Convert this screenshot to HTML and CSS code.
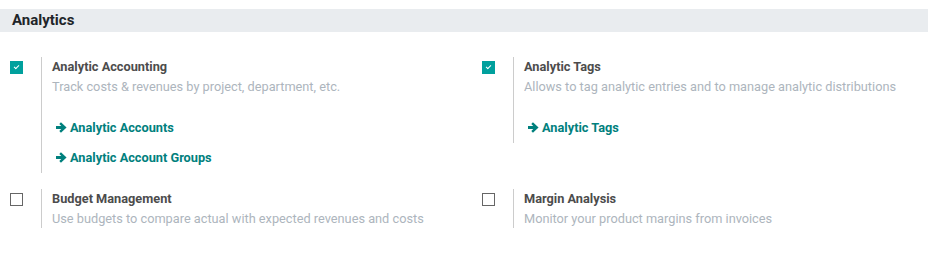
FILE: index.html
```html
<!DOCTYPE html>
<html lang="en">

<head>
    <meta charset="UTF-8">
    <meta name="viewport" content="width=device-width, initial-scale=1.0">
    <title>Analytics</title>
    <link rel="stylesheet" href="styles.css">
</head>

<body>
    <h2 class="section-title">Analytics</h2>
    <div class="settings">
        <div class="setting-box">
            <div class="left-pane">
                <span class="check checked"></span>
            </div>
            <div class="right-pane">
                <div class="label">Analytic Accounting</div>
                <div class="muted">Track costs &amp; revenues by project, department, etc.</div>
                <div class="links">
                    <a class="link" href="#"><svg class="arrow" viewBox="0 0 10 10"><path d="M0 3.6h4.8L3 1.8 4.5 0.3 9.6 5 4.5 9.7 3 8.2 4.8 6.4H0z"/></svg>Analytic Accounts</a>
                    <a class="link" href="#"><svg class="arrow" viewBox="0 0 10 10"><path d="M0 3.6h4.8L3 1.8 4.5 0.3 9.6 5 4.5 9.7 3 8.2 4.8 6.4H0z"/></svg>Analytic Account Groups</a>
                </div>
            </div>
        </div>
        <div class="setting-box">
            <div class="left-pane">
                <span class="check checked"></span>
            </div>
            <div class="right-pane">
                <div class="label">Analytic Tags</div>
                <div class="muted">Allows to tag analytic entries and to manage analytic distributions</div>
                <div class="links">
                    <a class="link" href="#"><svg class="arrow" viewBox="0 0 10 10"><path d="M0 3.6h4.8L3 1.8 4.5 0.3 9.6 5 4.5 9.7 3 8.2 4.8 6.4H0z"/></svg>Analytic Tags</a>
                </div>
            </div>
        </div>
        <div class="setting-box">
            <div class="left-pane">
                <span class="check"></span>
            </div>
            <div class="right-pane">
                <div class="label">Budget Management</div>
                <div class="muted">Use budgets to compare actual with expected revenues and costs</div>
            </div>
        </div>
        <div class="setting-box">
            <div class="left-pane">
                <span class="check"></span>
            </div>
            <div class="right-pane">
                <div class="label">Margin Analysis</div>
                <div class="muted">Monitor your product margins from invoices</div>
            </div>
        </div>
    </div>
</body>

</html>
```

FILE: styles.css
```css
body {
    margin: 0;
    padding-top: 9px;
    font-family: Roboto, "Liberation Sans", sans-serif;
    font-size: 12.75px;
    line-height: 19.5px;
    background: #fff;
}

.section-title {
    margin: 0;
    height: 23px;
    padding-left: 12px;
    background-color: #e9ecef;
    color: #212529;
    font-size: 15px;
    font-weight: 700;
    line-height: 23px;
}

.settings {
    display: grid;
    grid-template-columns: 472px 1fr;
    row-gap: 16px;
    padding-top: 25px;
}

.setting-box {
    display: flex;
    align-items: flex-start;
}

.left-pane {
    width: 41px;
    padding-left: 10px;
    padding-top: 4px;
    box-sizing: border-box;
}

.check {
    display: block;
    width: 13px;
    height: 13px;
    box-sizing: border-box;
    border: 1px solid #666;
    background: #fff;
    position: relative;
}

.check.checked {
    border-color: #00a09d;
    background: #00a09d;
}

.check.checked::after {
    content: "";
    position: absolute;
    left: 3px;
    top: 3px;
    width: 4px;
    height: 2px;
    border-left: 1.5px solid #fff;
    border-bottom: 1.5px solid #fff;
    transform: rotate(-45deg);
}

.right-pane {
    border-left: 1px solid #ccc;
    padding-left: 10px;
}

.label {
    color: #4c4c4c;
    font-weight: 700;
}

.muted {
    color: #adb5bd;
}

.links {
    margin-top: 17px;
}

.link {
    display: block;
    padding: 5px 0 5px 4px;
    height: 20px;
    color: #00807d;
    font-weight: 700;
    text-decoration: none;
}

.arrow {
    width: 11px;
    height: 11px;
    margin-right: 3px;
    vertical-align: -1px;
    fill: #00807d;
}
```
